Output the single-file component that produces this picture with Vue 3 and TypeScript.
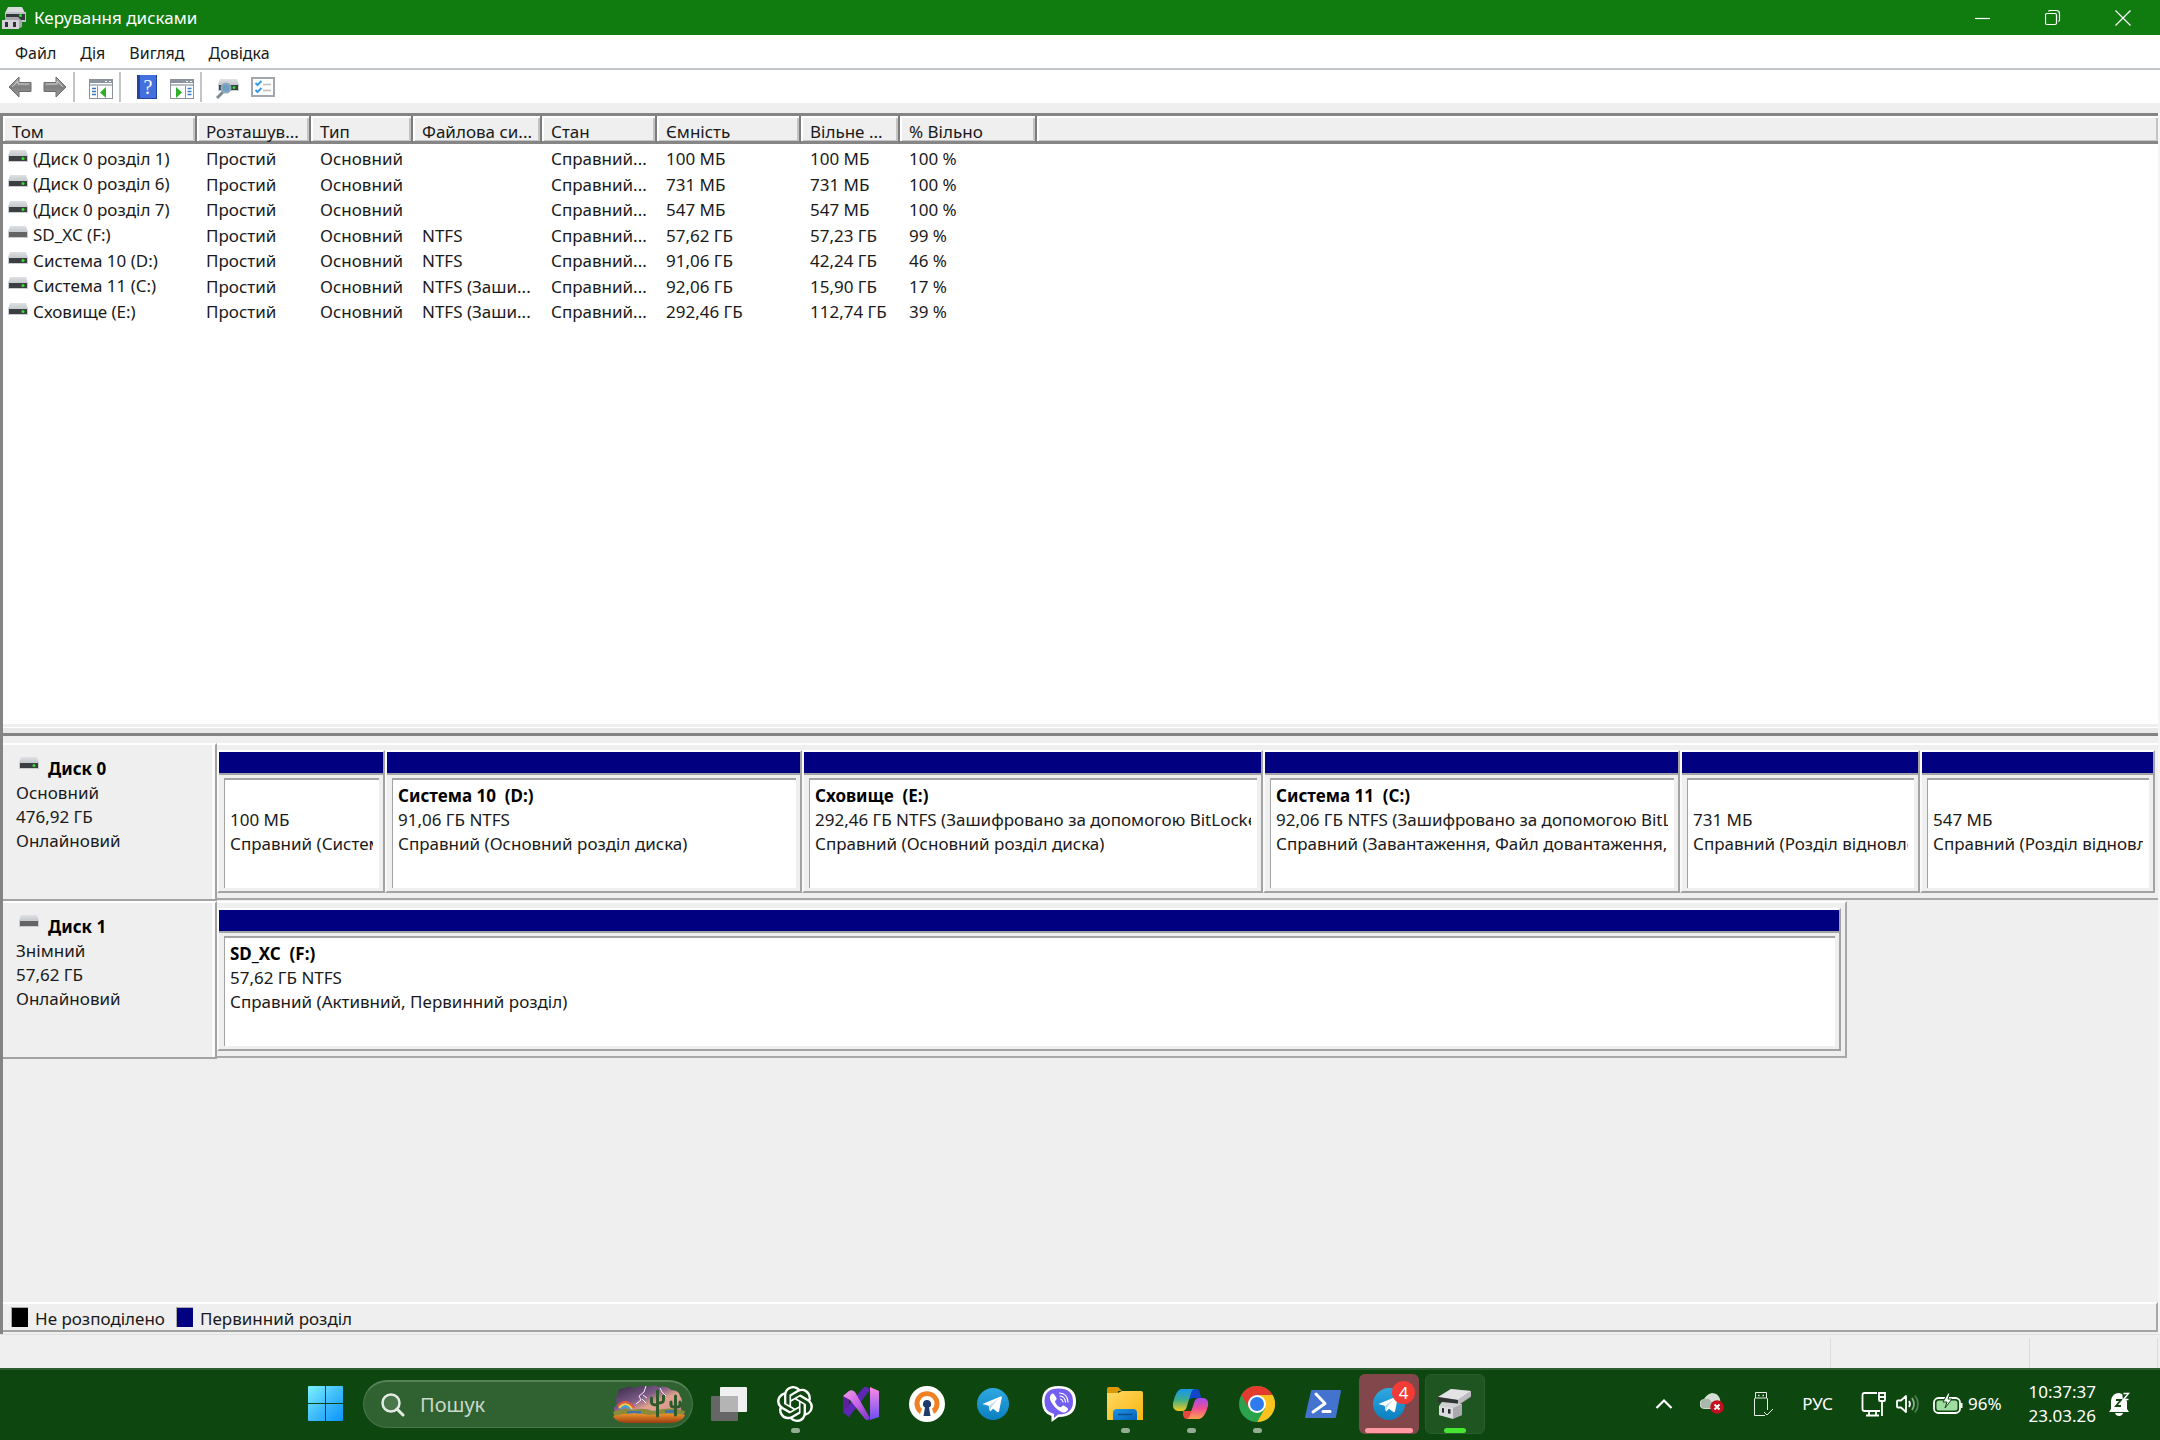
<script setup lang="ts">
import { ref } from 'vue'

interface Volume {
  name: string
  fs: string
  capacity: string
  free: string
  percent: string
  removable?: boolean
}

interface Partition {
  title: string
  size: string
  status: string
  weight: number
}

interface Disk {
  name: string
  kind: string
  size: string
  state: string
  share: number
  removable?: boolean
  partitions: Partition[]
}

const menu = ['Файл', 'Дія', 'Вигляд', 'Довідка']

const columns = ['Том', 'Розташув...', 'Тип', 'Файлова си...', 'Стан', 'Ємність', 'Вільне ...', '% Вільно', '']

const volumes: Volume[] = [
  { name: '(Диск 0 розділ 1)', fs: '', capacity: '100 МБ', free: '100 МБ', percent: '100 %' },
  { name: '(Диск 0 розділ 6)', fs: '', capacity: '731 МБ', free: '731 МБ', percent: '100 %' },
  { name: '(Диск 0 розділ 7)', fs: '', capacity: '547 МБ', free: '547 МБ', percent: '100 %' },
  { name: 'SD_XC (F:)', fs: 'NTFS', capacity: '57,62 ГБ', free: '57,23 ГБ', percent: '99 %', removable: true },
  { name: 'Система 10 (D:)', fs: 'NTFS', capacity: '91,06 ГБ', free: '42,24 ГБ', percent: '46 %' },
  { name: 'Система 11 (C:)', fs: 'NTFS (Заши...', capacity: '92,06 ГБ', free: '15,90 ГБ', percent: '17 %' },
  { name: 'Сховище (E:)', fs: 'NTFS (Заши...', capacity: '292,46 ГБ', free: '112,74 ГБ', percent: '39 %' },
]

const disks: Disk[] = [
  {
    name: 'Диск 0',
    kind: 'Основний',
    size: '476,92 ГБ',
    state: 'Онлайновий',
    share: 100,
    partitions: [
      { title: '', size: '100 МБ', status: 'Справний (Система EFI)', weight: 164 },
      { title: 'Система 10  (D:)', size: '91,06 ГБ NTFS', status: 'Справний (Основний розділ диска)', weight: 413 },
      { title: 'Сховище  (E:)', size: '292,46 ГБ NTFS (Зашифровано за допомогою BitLocker)', status: 'Справний (Основний розділ диска)', weight: 457 },
      { title: 'Система 11  (C:)', size: '92,06 ГБ NTFS (Зашифровано за допомогою BitLocker)', status: 'Справний (Завантаження, Файл довантаження, Основний розділ диска)', weight: 413 },
      { title: '', size: '731 МБ', status: 'Справний (Розділ відновлення)', weight: 236 },
      { title: '', size: '547 МБ', status: 'Справний (Розділ відновлення)', weight: 231 },
    ],
  },
  {
    name: 'Диск 1',
    kind: 'Знімний',
    size: '57,62 ГБ',
    state: 'Онлайновий',
    share: 84,
    removable: true,
    partitions: [
      { title: 'SD_XC  (F:)', size: '57,62 ГБ NTFS', status: 'Справний (Активний, Первинний розділ)', weight: 1 },
    ],
  },
]

const query = ref('')
</script>

<template>
  <div class="screen">
    <svg class="defs" aria-hidden="true">
      <defs>
        <linearGradient id="metal" x1="0" y1="0" x2="0" y2="1">
          <stop offset="0" stop-color="#dfe1e4" /><stop offset="1" stop-color="#c3c7cb" />
        </linearGradient>
        <linearGradient id="arrow" x1="0" y1="0" x2="0" y2="1">
          <stop offset="0" stop-color="#b4b4b4" /><stop offset="0.5" stop-color="#7f7f7f" /><stop offset="1" stop-color="#9a9a9a" />
        </linearGradient>
        <linearGradient id="win" x1="0" y1="0" x2="1" y2="1">
          <stop offset="0" stop-color="#7cf3ff" /><stop offset="0.5" stop-color="#41bdfb" /><stop offset="1" stop-color="#0a93fb" />
        </linearGradient>
        <linearGradient id="tg" x1="0" y1="0" x2="0" y2="1">
          <stop offset="0" stop-color="#2fa9e2" /><stop offset="1" stop-color="#0b7fc0" />
        </linearGradient>
      </defs>
      <symbol id="drive" viewBox="0 0 20 12">
        <path d="M2 0h16l2 6H0z" fill="url(#metal)" />
        <rect y="5" width="20" height="7" fill="#c9ccd0" />
        <rect x="1" y="6" width="18" height="5" fill="#3b3f42" />
        <circle cx="15" cy="8.5" r="1.5" fill="#2fe32f" />
      </symbol>
      <symbol id="drive-off" viewBox="0 0 20 12">
        <path d="M2 0h16l2 6H0z" fill="url(#metal)" />
        <rect y="5" width="20" height="7" fill="#c9ccd0" />
        <rect x="1" y="6" width="18" height="5" fill="#646464" />
      </symbol>
      <symbol id="telegram" viewBox="0 0 32 32">
        <circle cx="16" cy="16" r="16" fill="url(#tg)" />
        <path d="M6 15.700 23.500 8.500c1-.4 1.600.2 1.300 1.300l-2.700 13.300c-.2 1-.9 1.300-1.800.8l-4.300-3.200-2.300 2.200c-.5.5-1 .3-1.100-.4l-.9-4.700-5.500-1.500c-.8-.2-.8-.4-.2-.6z" fill="#fff" />
        <path d="m12 18 8.700-6.400-6.600 7.700-.6 3.400z" fill="#b8d9ea" />
      </symbol>
    </svg>

    <header class="titlebar">
      <svg class="app-icon" viewBox="0 0 24 24" aria-hidden="true">
        <path d="M6 1h14l3 6H3z" fill="#d8dadd" />
        <rect x="3" y="6" width="21" height="10" fill="#bfc2c6" />
        <rect x="4" y="8" width="19" height="6" fill="#33383a" />
        <circle cx="18.500" cy="9.500" r="1.500" fill="#2fe32f" />
        <path d="M3 11h13l4 4v6l-5 2H3z" fill="#a7a7ad" />
        <path d="M0 14h17v9H0z" fill="#d4d3da" />
        <rect x="3" y="16" width="3" height="5" fill="#333" /><rect x="11" y="16" width="3" height="5" fill="#333" />
      </svg>
      <h1>Керування дисками</h1>
      <div class="window-buttons">
        <button aria-label="Згорнути"><svg viewBox="0 0 16 16"><path d="M0 8.500h15" /></svg></button>
        <button aria-label="Відновити"><svg viewBox="0 0 16 16"><rect x=".5" y="3.500" width="11" height="11" rx="1.500" /><path d="M3.500 1.500q.5-1 1.500-1h6q3.500 0 3.500 3.500v6q0 1-1 1.500" /></svg></button>
        <button aria-label="Закрити"><svg viewBox="0 0 16 16"><path d="m.5.5 15 15m0-15-15 15" /></svg></button>
      </div>
    </header>

    <nav class="menubar">
      <button v-for="item in menu" :key="item">{{ item }}</button>
    </nav>

    <div class="toolbar">
      <button aria-label="Назад">
        <svg width="24" height="22" viewBox="0 0 24 22"><path d="M1 11 11 1v5.500h12v9H11V21z" fill="url(#arrow)" stroke="#6c6c6c" /><path d="M4 11l6-6v3h11" fill="none" stroke="#ccc" /></svg>
      </button>
      <button aria-label="Вперед">
        <svg width="24" height="22" viewBox="0 0 24 22"><path d="M23 11 13 1v5.500H1v9h12V21z" fill="url(#arrow)" stroke="#6c6c6c" /><path d="M3 8h11V5l6 6" fill="none" stroke="#ccc" /></svg>
      </button>
      <i class="sep"></i>
      <button aria-label="Показати дерево консолі">
        <svg class="low" width="24" height="20" viewBox="0 0 24 20">
          <rect x=".5" y=".5" width="23" height="19" fill="#fff" stroke="#8c9299" /><rect x="1" y="1" width="22" height="3" fill="#8b949e" /><rect x="1" y="5" width="22" height="2" fill="#b8bec5" />
          <path d="M16 2.500h2m2 0h2" stroke="#fff" /><path d="M8.500 7v12" stroke="#8c9299" />
          <path d="M3 9.500h4m-4 3h4m-4 3h4" stroke="#3a78c0" stroke-width="1.500" /><path d="M11 13.500 17 8v11z" fill="#2fae26" />
        </svg>
      </button>
      <i class="sep"></i>
      <button aria-label="Довідка">
        <svg width="20" height="24" viewBox="0 0 20 24"><rect width="20" height="24" fill="#24439c" /><rect x="3" width="16" height="23" fill="#4470dd" /><text x="11" y="19" text-anchor="middle" class="help-mark">?</text></svg>
      </button>
      <button aria-label="Показати панель дій">
        <svg class="low" width="24" height="20" viewBox="0 0 24 20">
          <rect x=".5" y=".5" width="23" height="19" fill="#fff" stroke="#8c9299" /><rect x="1" y="1" width="22" height="3" fill="#8b949e" /><rect x="1" y="5" width="22" height="2" fill="#b8bec5" />
          <path d="M16 2.500h2m2 0h2" stroke="#fff" /><path d="M15.500 7v12" stroke="#8c9299" />
          <path d="M17.500 9.500h4m-4 3h4m-4 3h4" stroke="#3a78c0" stroke-width="1.500" /><path d="M12 13.500 6 8v11z" fill="#2fae26" />
        </svg>
      </button>
      <i class="sep"></i>
      <button aria-label="Повторити перевірку">
        <svg class="low" width="24" height="20" viewBox="0 0 24 20">
          <path d="M4 0h17l2 6H2z" fill="url(#metal)" /><rect x="2" y="5" width="21" height="7" fill="#c9ccd0" /><rect x="3" y="6" width="19" height="5" fill="#3b3f42" /><circle cx="18" cy="8.500" r="1.500" fill="#2fe32f" />
          <path d="m1 19 6-6" stroke="#7c8a96" stroke-width="3" /><circle cx="10" cy="9" r="4.500" fill="#6ca0c4" stroke="#8fa9bd" stroke-width="2" />
        </svg>
      </button>
      <button aria-label="Властивості">
        <svg width="24" height="20" viewBox="0 0 24 20">
          <rect x="1" y="1" width="22" height="18" fill="#fff" stroke="#a2a7ad" stroke-width="2" /><path d="m4.500 6 2 2 4-4m-6 9 2 2 4-4" fill="none" stroke="#3b9be8" stroke-width="2" /><path d="M12 7.500h8m-8 6h8" stroke="#bcbcbc" stroke-width="1.500" />
        </svg>
      </button>
    </div>
    <div class="gutter"></div>

    <main class="console">
      <section class="volume-pane">
        <table>
          <colgroup><col v-for="(c, i) in columns" :key="i" :class="'col-' + i" /></colgroup>
          <thead>
            <tr><th v-for="(c, i) in columns" :key="i" scope="col">{{ c }}</th></tr>
          </thead>
          <tbody>
            <tr v-for="v in volumes" :key="v.name">
              <td class="volume-name">
                <svg width="20" height="12" aria-hidden="true"><use :href="v.removable ? '#drive-off' : '#drive'" /></svg>{{ v.name }}
              </td>
              <td>Простий</td>
              <td>Основний</td>
              <td>{{ v.fs }}</td>
              <td>Справний...</td>
              <td>{{ v.capacity }}</td>
              <td>{{ v.free }}</td>
              <td>{{ v.percent }}</td>
              <td></td>
            </tr>
          </tbody>
        </table>
        <div class="splitter"></div>
      </section>

      <section class="disk-pane">
        <div class="disk-list">
          <article v-for="d in disks" :key="d.name" class="disk">
            <div class="disk-label">
              <h2><svg width="20" height="12" aria-hidden="true"><use :href="d.removable ? '#drive-off' : '#drive'" /></svg>{{ d.name }}</h2>
              <p>{{ d.kind }}</p>
              <p>{{ d.size }}</p>
              <p>{{ d.state }}</p>
            </div>
            <div class="track">
              <div class="partitions" :class="{ full: d.share === 100 }" :style="{ width: d.share + '%' }">
                <div v-for="(p, i) in d.partitions" :key="i" class="partition" :style="{ flexGrow: p.weight }">
                  <div class="stripe"></div>
                  <div class="box">
                    <div class="info">
                      <strong>{{ p.title }}</strong>
                      <span>{{ p.size }}</span>
                      <span>{{ p.status }}</span>
                    </div>
                  </div>
                </div>
              </div>
            </div>
          </article>
        </div>
        <div class="legend">
          <span><i class="swatch free"></i>Не розподілено</span>
          <span><i class="swatch primary"></i>Первинний розділ</span>
        </div>
      </section>
    </main>

    <div class="statusbar"><i class="status-main"></i><i class="status-mid"></i><i class="status-end"></i></div>

    <footer class="taskbar">
      <button class="task start" aria-label="Пуск">
        <svg width="36" height="36" viewBox="0 0 36 36"><path d="M1 0h16v17H0V1q0-1 1-1zm17 0h16q1 0 1 1v16H18zM0 18h17v17H1q-1 0-1-1zm18 0h17v16q0 1-1 1H18z" fill="url(#win)" /></svg>
      </button>
      <label class="search">
        <svg width="24" height="24" viewBox="0 0 24 24" fill="none" stroke="#e4ebe4" stroke-width="2.500"><circle cx="10" cy="10" r="8.500" fill="#fff2" /><path d="m16 16 6 6" stroke-linecap="round" stroke-width="3" /></svg>
        <input v-model="query" type="text" placeholder="Пошук" aria-label="Пошук" />
        <svg class="scene" width="72" height="40" viewBox="0 0 72 40">
          <defs>
            <linearGradient id="sky" x1="0" y1="0" x2="1" y2="1"><stop offset="0" stop-color="#2e2740" /><stop offset="0.400" stop-color="#7b5a86" /><stop offset="0.600" stop-color="#e0a28e" /><stop offset="0.800" stop-color="#d99a90" /><stop offset="1" stop-color="#b56a80" /></linearGradient>
            <linearGradient id="sand" x1="0" y1="0" x2="0" y2="1"><stop offset="0" stop-color="#f0982c" /><stop offset="1" stop-color="#9c3d12" /></linearGradient>
          </defs>
          <path d="M4 30Q-2 24 4 19 1 12 5 9q-1-6 7-6 5-3 10 0 6-4 12-1 7-3 12 0 8-2 12 3 8 0 9 6 4 5 0 9 3 6-1 10z" fill="url(#sky)" />
          <path d="M5 21q8-9 16 2" fill="none" stroke="#e8573c" stroke-width="2" /><path d="M6 23q7-8 13 1" fill="none" stroke="#f2d444" stroke-width="2" /><path d="M8 24q5-6 9 1" fill="none" stroke="#39a7e0" stroke-width="2" />
          <path d="m33 1-2 6-5 4 2 4-5 4m6-5 4 4m-3-8 4 3m13-10 2 4 4 4" fill="none" stroke="#f6ecff" />
          <path d="M0 27q10-5 20-2 10-3 20 1 16-5 32 0l-2 7H2z" fill="#8a8a3a" /><path d="M14 26h14v3H14zm38-1h12v3H52z" fill="#3f74a8" />
          <path d="M0 31q20-5 36-1 20-3 36 0-2 6-12 8H14Q2 37 0 31z" fill="url(#sand)" />
          <path d="M44.500 6v25M38.500 13v4q0 3 6 3m6-9v4q0 3-6 3M62.500 11v19M58 17v3q0 2 4 2m5-5v3q0 2-4 2" fill="none" stroke="#2c5a2b" stroke-width="3" stroke-linecap="round" />
        </svg>
      </label>
      <button class="task" aria-label="Подання завдань">
        <svg width="36" height="34" viewBox="0 0 36 34"><rect x="9" width="27" height="25" rx="1" fill="#f0f0f0" /><rect y="9" width="27" height="25" rx="1" fill="#666" /><path d="M9 9h18v16H9z" fill="#b4b4b4" /></svg>
      </button>
      <button class="task running" aria-label="ChatGPT">
        <svg width="36" height="36" viewBox="0 0 24 24" fill="#fff"><path d="M22.2819 9.8211a5.9847 5.9847 0 0 0-.5157-4.9108 6.0462 6.0462 0 0 0-6.5098-2.9A6.0651 6.0651 0 0 0 4.9807 4.1818a5.9847 5.9847 0 0 0-3.9977 2.9 6.0462 6.0462 0 0 0 .7427 7.0966 5.98 5.98 0 0 0 .511 4.9107 6.051 6.051 0 0 0 6.5146 2.9001A5.9847 5.9847 0 0 0 13.2599 24a6.0557 6.0557 0 0 0 5.7718-4.2058 5.9894 5.9894 0 0 0 3.9977-2.9001 6.0557 6.0557 0 0 0-.7475-7.0729zm-9.022 12.6081a4.4755 4.4755 0 0 1-2.8764-1.0408l.1419-.0804 4.7783-2.7582a.7948.7948 0 0 0 .3927-.6813v-6.7369l2.02 1.1686a.071.071 0 0 1 .038.052v5.5826a4.504 4.504 0 0 1-4.4945 4.4944zm-9.6607-4.1254a4.4708 4.4708 0 0 1-.5346-3.0137l.142.0852 4.783 2.7582a.7712.7712 0 0 0 .7806 0l5.8428-3.3685v2.3324a.0804.0804 0 0 1-.0332.0615L9.74 19.9502a4.4992 4.4992 0 0 1-6.1408-1.6464zM2.3408 7.8956a4.485 4.485 0 0 1 2.3655-1.9728V11.6a.7664.7664 0 0 0 .3879.6765l5.8144 3.3543-2.0201 1.1685a.0757.0757 0 0 1-.071 0l-4.8303-2.7865A4.504 4.504 0 0 1 2.3408 7.872zm16.5963 3.8558L13.1038 8.364 15.1192 7.2a.0757.0757 0 0 1 .071 0l4.8303 2.7913a4.4944 4.4944 0 0 1-.6765 8.1042v-5.6772a.79.79 0 0 0-.407-.667zm2.0107-3.0231l-.142-.0852-4.7735-2.7818a.7759.7759 0 0 0-.7854 0L9.409 9.2297V6.8974a.0662.0662 0 0 1 .0284-.0615l4.8303-2.7866a4.4992 4.4992 0 0 1 6.6802 4.66zM8.3065 12.863l-2.02-1.1638a.0804.0804 0 0 1-.038-.0567V6.0742a4.4992 4.4992 0 0 1 7.3757-3.4537l-.142.0805L8.704 5.459a.7948.7948 0 0 0-.3927.6813zm1.0976-2.3654l2.602-1.4998 2.6069 1.4998v2.9994l-2.5974 1.4997-2.6067-1.4997Z" /></svg>
      </button>
      <button class="task" aria-label="Visual Studio">
        <svg width="36" height="36" viewBox="0 0 36 36">
          <defs>
            <linearGradient id="vs1" x1="0" y1="0" x2="1" y2="1"><stop offset="0" stop-color="#f79be4" /><stop offset="0.500" stop-color="#c564e8" /><stop offset="1" stop-color="#7a2fc4" /></linearGradient>
            <linearGradient id="vs2" x1="0" y1="0" x2="0" y2="1"><stop offset="0" stop-color="#fb8be2" /><stop offset="1" stop-color="#6b4df5" /></linearGradient>
          </defs>
          <path d="M0 10 6 5v26l-6-5z" fill="#5d1f9c" /><path d="M6 31 27 4l-3-3q-2-1-4 1L0 26z" fill="#5b27b3" />
          <path d="M27 1l9 4v26l-9 3z" fill="url(#vs2)" /><path d="M0 10 6 5q3-2 6 1l15 26q-2 4-5 1L7 14z" fill="url(#vs1)" />
        </svg>
      </button>
      <button class="task" aria-label="OpenVPN">
        <svg width="36" height="36" viewBox="0 0 36 36"><circle cx="18" cy="18" r="18" fill="#fff" /><path d="M11 28A12.500 12.500 0 1 1 25 28l-2-5a7.500 7.500 0 1 0-10 0z" fill="#ee8122" /><path d="M18 14a4 4 0 0 1 2 7.500l1.500 8.500h-7l1.500-8.500a4 4 0 0 1 2-7.500z" fill="#1c3a6b" /></svg>
      </button>
      <button class="task" aria-label="Telegram"><svg width="32" height="32"><use href="#telegram" /></svg></button>
      <button class="task" aria-label="Viber">
        <svg width="36" height="36" viewBox="0 0 36 36"><path d="M17.500 0Q35 0 35 15.500T17.500 31l-7 5v-6Q1 27 1 15.500 1 0 17.500 0z" fill="#fff" /><path d="M17.500 2.500Q32 2.500 32 15.500t-15 13l-4 3.500v-4Q3.500 26 3.500 15.500 3.500 2.500 17.500 2.500z" fill="#7360f2" /><path d="M10 8.500q2-2 3.500.5l2 3q.5 1.500-1 2.500-1 1 0 2.500 1.500 3 4 4 1.500.5 2.500-.8 1-1.200 2.500-.2l3 2q1.500 1.500-.5 3-2.500 2.500-5.500 1-8-4-11.500-12.500-.5-3 1-5z" fill="#fff" /><path d="M18.500 7q8 .5 8.500 9m-8-6q5 .5 5.500 6m-5-3q2 .5 2.500 3" fill="none" stroke="#fff" stroke-width="1.200" stroke-linecap="round" /></svg>
      </button>
      <button class="task running" aria-label="Провідник">
        <svg width="36" height="34" viewBox="0 0 36 34">
          <defs><linearGradient id="fold" x1="0" y1="0" x2="1" y2="1"><stop offset="0" stop-color="#ffd964" /><stop offset="1" stop-color="#f9b50e" /></linearGradient><linearGradient id="fpock" x1="0" y1="0" x2="1" y2="1"><stop offset="0" stop-color="#1f96e4" /><stop offset="1" stop-color="#0560b6" /></linearGradient></defs>
          <path d="M0 2q0-2 2-2h9l4 4h-4v4H0z" fill="#dc9804" /><path d="M0 6h11l4-2h19q2 0 2 2v27H1q-1 0-1-1z" fill="url(#fold)" /><path d="M6 33V26q0-4 4-4h16q4 0 4 4v7z" fill="url(#fpock)" /><path d="M11 27.500h14" stroke="#0a4c8f" stroke-width="1.500" />
        </svg>
      </button>
      <button class="task running" aria-label="Copilot">
        <svg width="36" height="32" viewBox="0 0 36 32">
          <defs>
            <linearGradient id="cp1" x1="0" y1="0" x2="0" y2="1"><stop offset="0" stop-color="#1795f0" /><stop offset="0.500" stop-color="#3fae8a" /><stop offset="1" stop-color="#f3cb1c" /></linearGradient>
            <linearGradient id="cp2" x1="0" y1="0" x2="0" y2="1"><stop offset="0" stop-color="#a34bf0" /><stop offset="0.500" stop-color="#ee4f94" /><stop offset="1" stop-color="#fba34c" /></linearGradient>
          </defs>
          <path d="M18 1h5q3 0 4 4l1 5h-9l-5 3z" fill="#1245c9" /><path d="M10 23h8l4-5-4 13h-4q-3 0-4-4z" fill="#e8453c" />
          <path d="M8 1h14q-3 0-4 4l-4 13q-1 5-5 5H5q-6-1-5-8Q3 2 8 1z" fill="url(#cp1)" /><path d="M27 10h4q5 1 4 8-3 12-9 13H13q3 0 4-4l4-12q1-5 6-5z" fill="url(#cp2)" />
        </svg>
      </button>
      <button class="task running" aria-label="Chrome">
        <svg width="36" height="36" viewBox="0 0 36 36"><circle cx="18" cy="18" r="18" fill="#2ba24c" /><path d="M2.410 9A18 18 0 0 1 33.590 9L18 18z" fill="#e33b2e" /><path d="M2.410 9 10.200 22.500 18 9z" fill="#e33b2e" /><path d="M33.590 9A18 18 0 0 1 18 36l7.800-13.500L18 9z" fill="#fcc31e" /><path d="M18 36 25.800 22.500 18 18l-7.800 4.500z" fill="#2ba24c" /><circle cx="18" cy="18" r="9" fill="#fff" /><circle cx="18" cy="18" r="7" fill="#2d7bee" /></svg>
      </button>
      <button class="task" aria-label="PowerShell">
        <svg width="36" height="28" viewBox="0 0 36 28"><path d="M7 0h28q1 0 1 1l-5 26q0 1-1 1H1q-1 0-1-1L6 1q0-1 1-1z" fill="#4372cf" /><path d="m11 4 9 9.500L8 22M18 21.500h7" fill="none" stroke="#fff" stroke-width="3" stroke-linecap="round" stroke-linejoin="round" /></svg>
      </button>
      <button class="task alert" aria-label="Telegram, 4 сповіщення"><svg width="32" height="32"><use href="#telegram" /></svg><span class="badge">4</span></button>
      <button class="task active" aria-label="Керування дисками">
        <svg width="36" height="34" viewBox="0 0 36 34">
          <path d="M1 10 14 2l20 2v6l-12 8-8-1z" fill="#8d8d8d" /><path d="M14 2 34 4 21 13 1 10z" fill="#e3e3e6" /><path d="M1 10l20 3v5L1 15z" fill="#2f3332" /><path d="M21 13 34 4v5l-13 9z" fill="#bebec2" />
          <path d="M2 19 5 15l20 2v11l-9 3-14-3z" fill="#cfcfd4" /><path d="m2 19 14 2v11L2 28z" fill="#dcdbe0" /><path d="m16 21 9-4v11l-9 4z" fill="#a9a9af" /><path d="M5 21l2 .3v4.500l-2-.4zm6 1 2.500.3v4.500l-2.500-.4z" fill="#2a2a2a" />
        </svg>
      </button>

      <div class="tray">
        <button class="caret" aria-label="Показати приховані піктограми"><svg width="18" height="12" viewBox="0 0 18 12" fill="none" stroke="#fff" stroke-width="2.200"><path d="m1.500 10 7.500-7.500 7.500 7.500" /></svg></button>
        <svg class="cloud" width="24" height="22" viewBox="0 0 24 22"><path d="M5 16a5 5 0 0 1-1-10Q7 1 12 0q6 0 8 6l1 10z" fill="#d5ddd5" /><path d="M3 15a5 5 0 0 1 1-9q4-1 6 1l5 8z" fill="#aab8aa" /><circle cx="17" cy="14" r="6.800" fill="#c50f1f" /><path d="m14.500 11.500 5 5m0-5-5 5" stroke="#fff" stroke-width="2" /></svg>
        <svg class="usb" width="20" height="26" viewBox="0 0 20 26" fill="none" stroke="#e8efe8"><path d="M2.500 7V1.500h11V7M12 24.500H1.500V8q0-1 1-1h11q1 0 1 1v11M11 21l3 3 6-6" /><path d="M5 4.500h1.500m3 0H11" stroke-width="1.500" /></svg>
        <span class="lang">РУС</span>
        <div class="system">
          <svg width="26" height="26" viewBox="0 0 26 26" fill="none" stroke="#fff" stroke-width="1.800"><path d="M16 2H3.500Q1.500 2 1.500 4v14q0 2 2 2H19M8 20v4m7-4v4M5 24.500h13" /><path d="M18 2h6v7q0 1-1 1h-4q-1 0-1-1zm0 4h6m-3 4v15" /></svg>
          <svg width="24" height="20" viewBox="0 0 24 20" fill="none" stroke="#fff" stroke-width="1.800"><path d="M1 7.500q0-1 1-1h3L10 2v16l-5-4.500H2q-1 0-1-1z" stroke-linejoin="round" /><path d="M13 7q2 3 0 6" /><path d="M16 4q4 6 0 12" stroke="#8fae90" /><path d="M19 1.500q6 8.500 0 17" stroke="#4f7c51" /></svg>
          <svg class="battery" width="30" height="22" viewBox="0 0 30 22"><rect x="1" y="5" width="26" height="15" rx="4.500" fill="none" stroke="#fff" stroke-width="1.800" /><path d="M28.500 10v5" stroke="#fff" stroke-width="2" /><rect x="3.500" y="7.500" width="21" height="10" rx="2.500" fill="#9fdca0" /><path d="m15 0-5 9h4l-2 6 7-9h-4l2-6z" fill="#fff" stroke="#0d480f" /></svg>
          <span>96%</span>
        </div>
        <time class="clock">10:37:37<br />23.03.26</time>
        <svg class="bell" width="22" height="24" viewBox="0 0 22 24"><path d="M3 17V9q1-8 8-8 7 1 8 9v7l2 3H1zm4 4h8q-1 3-4 3t-4-3z" fill="#fff" /><path d="M8 8h5l-5 6h5" fill="none" stroke="#0d480f" stroke-width="1.800" /><path d="M14 0h7v8h-6z" fill="#0d480f" /><path d="M15.500 1.500h5l-5 6h5" fill="none" stroke="#fff" stroke-width="1.500" /></svg>
      </div>
    </footer>
  </div>
</template>

<style>
body {
  background: #efefef;
}
</style>

<style scoped>
.screen,
.screen * {
  box-sizing: border-box;
}

.screen {
  min-height: 100vh;
  display: flex;
  flex-direction: column;
  font: 17px/24px "Noto Sans", "Open Sans", sans-serif;
  color: #1a1a1a;
  background: #efefef;
}

.defs {
  position: absolute;
  width: 0;
  height: 0;
}

button {
  font: inherit;
  color: inherit;
  border: 0;
  padding: 0;
  background: none;
}

svg {
  display: block;
  flex: none;
}

h1,
h2,
p {
  margin: 0;
  font-size: inherit;
}

.titlebar {
  display: flex;
  align-items: center;
  height: 35px;
  padding: 0 2px;
  background: #107c10;
  color: #fff;
}

.app-icon {
  width: 24px;
  height: 24px;
}

.titlebar h1 {
  margin-left: 8px;
  font-weight: 400;
}

.window-buttons {
  display: flex;
  align-self: stretch;
  margin-left: auto;
}

.window-buttons button {
  display: flex;
  align-items: center;
  justify-content: center;
  width: 70px;
}

.window-buttons svg {
  width: 16px;
  height: 16px;
  fill: none;
  stroke: #fff;
  stroke-width: 1.2;
}

.menubar {
  display: flex;
  height: 35px;
  padding: 0 3px;
  font-size: 16px;
  background: #fff;
  border-bottom: 2px solid #c3c6c9;
}

.menubar button {
  padding: 2px 12px 0;
}

.toolbar {
  display: flex;
  align-items: center;
  height: 33px;
  padding-left: 2px;
  background: #fff;
}

.toolbar button {
  display: flex;
  align-items: center;
  justify-content: center;
  width: 35px;
  height: 33px;
}

.toolbar .low {
  margin-top: 4px;
}

.sep {
  width: 2px;
  height: 30px;
  margin: 0 8px 0 1px;
  background: #c4c4c4;
}

.help-mark {
  fill: #fff;
  font: 20px "Liberation Serif", serif;
}

.gutter {
  height: 10px;
}

.console {
  flex: 1;
  display: flex;
  flex-direction: column;
  border-left: 3px solid #848484;
  border-right: 2px solid #f5f5f5;
}

.volume-pane {
  flex: 620 0 0px;
  display: flex;
  flex-direction: column;
  background: #fff;
  border-top: 3px solid #848484;
}

table {
  width: 100%;
  table-layout: fixed;
  border-spacing: 0;
}

.col-0 { width: 194px; }
.col-1 { width: 114px; }
.col-2 { width: 102px; }
.col-3 { width: 129px; }
.col-4 { width: 115px; }
.col-5 { width: 144px; }
.col-6 { width: 99px; }
.col-7 { width: 137px; }

th {
  height: 28px;
  padding: 7px 0 0 9px;
  font-weight: 400;
  line-height: 18px;
  text-align: left;
  white-space: nowrap;
  background: #efefef;
  border-right: 2px solid #7c7c7c;
  border-bottom: 3px solid #868686;
  box-shadow: inset 2px 2px #fff, inset -2px -1px #c4c4c4;
}

th:last-child {
  border-right: 0;
}

td {
  height: 25px;
  padding: 0 0 0 9px;
  line-height: 25px;
  white-space: nowrap;
}

tbody tr:nth-child(even) td {
  height: 26px;
}

tbody::before {
  content: "";
  display: block;
  height: 2px;
}

td.volume-name {
  display: flex;
  gap: 5px;
  padding-left: 5px;
}

.volume-name svg {
  margin-top: 4px;
}

.splitter {
  height: 12px;
  margin-top: auto;
  background: #e9e9e9;
  border-top: 3px solid #efefef;
  border-bottom: 3px solid #848484;
  box-shadow: inset 0 1px #fff;
}

.disk-pane {
  flex: 598 0 0px;
  display: flex;
  flex-direction: column;
}

.disk-list {
  flex: 1;
  padding-top: 7px;
}

.disk {
  display: flex;
  height: 158px;
}

.disk-label {
  flex: none;
  width: 214px;
  padding: 12px 0 0 13px;
  border-top: 2px solid #fff;
  border-right: 2px solid #a3a3a3;
  border-bottom: 2px solid #a3a3a3;
  box-shadow: inset -3px 0 #fafafa;
}

.disk-label h2 {
  display: flex;
  gap: 9px;
  padding-left: 3px;
  color: #000;
}

.track {
  flex: 1;
  min-width: 0;
}

.partitions {
  display: flex;
  height: 157px;
  padding: 5px 4px 5px 0;
  border-top: 2px solid #fff;
  border-right: 2px solid #a8a8a8;
  border-bottom: 2px solid #a8a8a8;
}

.partitions.full {
  padding-right: 3px;
  border-right: 0;
}

.partition {
  flex-basis: 0;
  min-width: 0;
  border-top: 2px solid #fff;
  border-left: 2px solid #fafafa;
  border-right: 2px solid #a3a3a3;
  border-bottom: 2px solid #a3a3a3;
}

.stripe {
  height: 23px;
  background: #000080;
  border-bottom: 2px solid #a3a3a3;
}

.box {
  height: 110px;
  margin: 3px 4px 0 5px;
  padding: 4px 6px 0 5px;
  background: #fff;
  border-top: 2px solid #a3a3a3;
  border-left: 1px solid #a3a3a3;
}

.info {
  overflow: hidden;
  white-space: pre;
}

.info strong,
.info span {
  display: block;
  height: 24px;
}

.info strong {
  color: #000;
}

.legend {
  display: flex;
  gap: 11px;
  height: 30px;
  margin-bottom: 2px;
  padding: 3px 0 0 8px;
  border-top: 2px solid #fff;
  border-right: 2px solid #a8a8a8;
  border-bottom: 2px solid #a3a3a3;
}

.legend span {
  display: flex;
  gap: 7px;
}

.swatch {
  width: 17px;
  height: 20px;
  border: 1px solid #a8a8a8;
  border-width: 1px 0 0 1px;
}

.free {
  background: #000;
}

.primary {
  background: #000080;
}

.statusbar {
  display: flex;
  justify-content: flex-end;
  height: 34px;
  padding: 3px 2px 0 0;
  border-top: 1px solid #e0e0e0;
}

.statusbar i {
  border-right: 1px solid #dcdcdc;
}

.status-main {
  flex: 1;
}

.status-mid {
  width: 199px;
}

.status-end {
  width: 128px;
}

.taskbar {
  display: flex;
  align-items: center;
  gap: 6px;
  height: 72px;
  padding-left: 296px;
  background: #0d460f;
  box-shadow: inset 0 2px #2f5e32;
  color: #fff;
}

.task {
  position: relative;
  flex: none;
  display: flex;
  align-items: center;
  justify-content: center;
  width: 60px;
  height: 60px;
  border-radius: 6px;
}

.task.running::after,
.task.alert::after,
.task.active::after {
  content: "";
  position: absolute;
  bottom: 1px;
  left: 26px;
  width: 9px;
  height: 5px;
  border-radius: 3px;
  background: #94ae95;
}

.task.alert {
  background: #82474b;
}

.task.alert::after {
  left: 6px;
  width: 48px;
  background: #ff9aa2;
}

.task.active {
  background: #1e5521;
  border: 1px solid #2a5f2d;
}

.task.active::after {
  left: 18px;
  bottom: 0;
  width: 22px;
  background: #45e532;
}

.badge {
  position: absolute;
  top: 7px;
  right: 4px;
  width: 23px;
  height: 23px;
  border-radius: 50%;
  background: #f33b35;
  line-height: 23px;
}

.search {
  flex: none;
  display: flex;
  align-items: center;
  width: 330px;
  height: 48px;
  margin-left: 1px;
  padding: 0 7px 0 17px;
  border: 1px solid #487649;
  border-top: 2px solid #568257;
  border-radius: 24px;
  background: #2f6131;
}

.search input {
  flex: 1;
  min-width: 0;
  margin-left: 15px;
  padding: 0;
  border: 0;
  outline: 0;
  background: none;
  color: #fff;
  font: 20px/28px "Noto Sans", "Open Sans", sans-serif;
}

.search input::placeholder {
  color: #cbd8cb;
  opacity: 1;
}

.tray {
  display: flex;
  align-items: center;
  margin-left: auto;
  padding-right: 30px;
}

.cloud {
  margin-left: 27px;
}

.usb {
  margin-left: 29px;
}

.lang {
  margin-left: 29px;
}

.system {
  display: flex;
  align-items: center;
  gap: 9px;
  margin-left: 28px;
}

.system .battery {
  margin-left: 4px;
}

.system span {
  margin-left: -4px;
}

.clock {
  margin-left: 27px;
  text-align: right;
}

.bell {
  margin-left: 12px;
}
</style>
